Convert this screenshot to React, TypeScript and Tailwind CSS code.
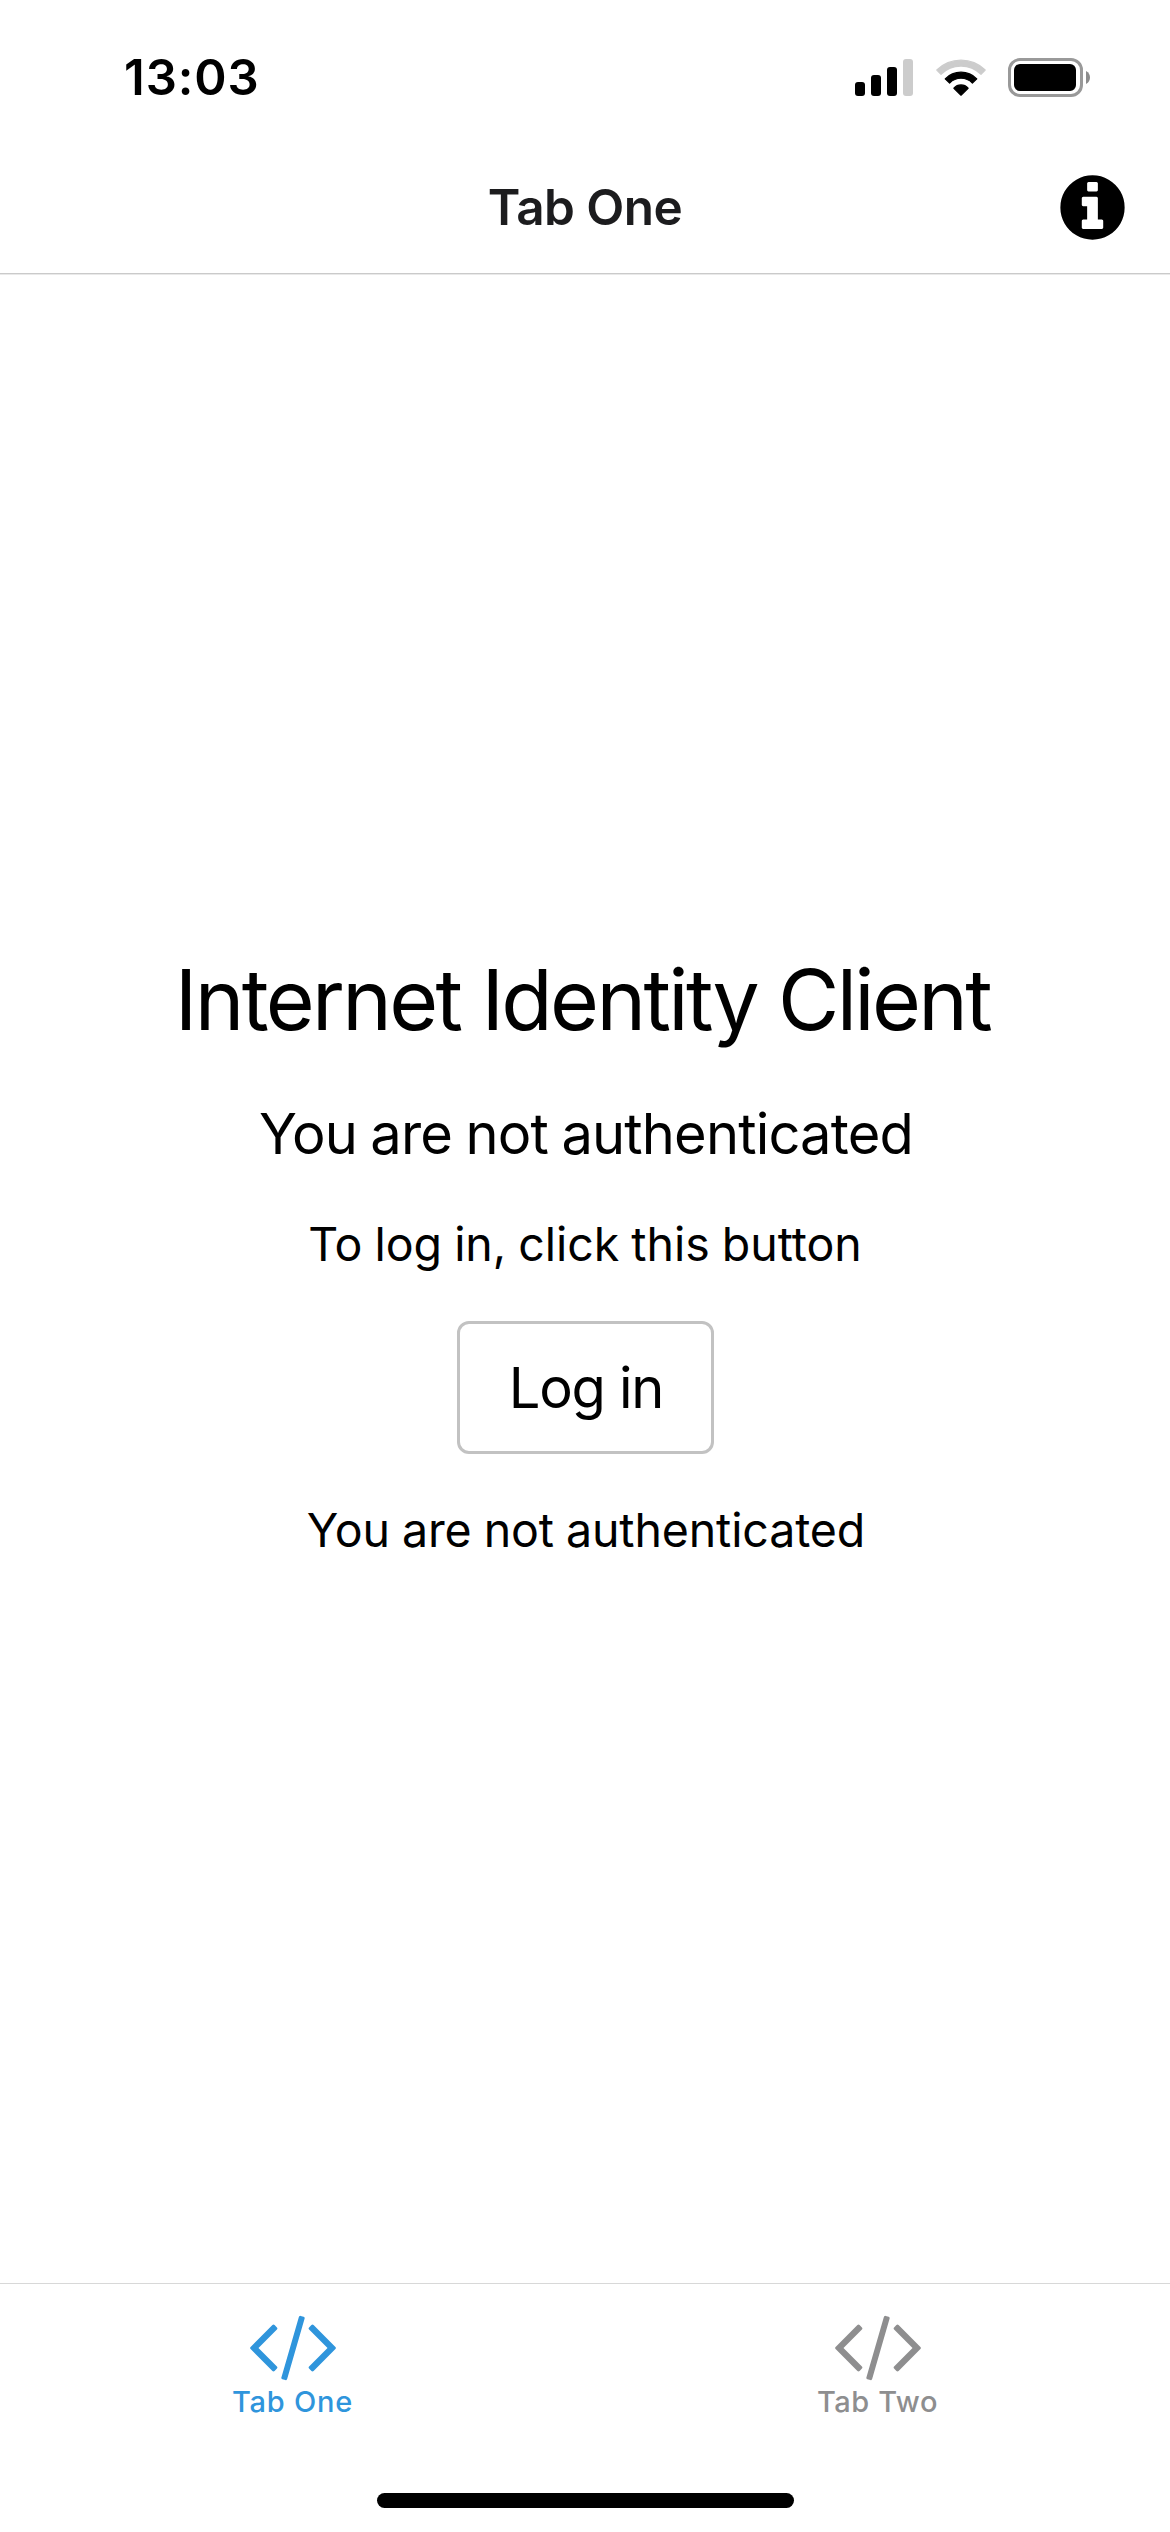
function SignalIcon() {
  return (
    <svg width="58" height="38" viewBox="0 0 58 38">
      <rect x="0" y="24" width="10" height="14" rx="3" fill="#000" />
      <rect x="16" y="17" width="10" height="21" rx="3" fill="#000" />
      <rect x="32" y="9" width="10" height="29" rx="3" fill="#000" />
      <rect x="48" y="1" width="10" height="37" rx="3" fill="#ccc" />
    </svg>
  );
}

function WifiIcon() {
  return (
    <svg width="52" height="38" viewBox="0 0 52 38" strokeWidth="1.2" strokeLinejoin="round">
      <path d="M1.8 12A34.6 34.6 0 0 1 50.2 12L46 16.3A28.4 28.4 0 0 0 6 16.3Z" fill="#ccc" stroke="#ccc" />
      <path d="M10.2 20.9A22 22 0 0 1 41.8 20.9L37.4 25A16 16 0 0 0 14.6 25Z" fill="#000" stroke="#000" />
      <path d="M18.9 30.2A9.4 9.4 0 0 1 33.1 30.2L26 37.2Z" fill="#000" stroke="#000" />
    </svg>
  );
}

function BatteryIcon() {
  return (
    <svg width="83" height="39" viewBox="0 0 83 39">
      <rect x="1.5" y="1.5" width="72" height="36" rx="10.5" fill="none" stroke="#999" strokeWidth="3" />
      <rect x="6" y="6" width="62" height="27" rx="6" fill="#000" />
      <path d="M78 13C81 14.6 82 17 82 19.5S81 24.4 78 26Z" fill="#8c8c8c" />
    </svg>
  );
}

function InfoIcon() {
  return (
    <svg width="75" height="75" viewBox="0 0 1792 1792" fill="currentColor">
      <path d="M1152 1376v-160q0-14-9-23t-23-9h-96v-512q0-14-9-23t-23-9h-320q-14 0-23 9t-9 23v160q0 14 9 23t23 9h96v320h-96q-14 0-23 9t-9 23v160q0 14 9 23t23 9h448q14 0 23-9t9-23zm-128-896v-160q0-14-9-23t-23-9h-192q-14 0-23 9t-9 23v160q0 14 9 23t23 9h192q14 0 23-9t9-23zm640 416q0 209-103 385.5t-279.5 279.5-385.5 103-385.5-103-279.5-279.5-103-385.5 103-385.5 279.5-279.5 385.5-103 385.5 103 279.5 279.5 103 385.5z" />
    </svg>
  );
}

function CodeIcon() {
  return (
    <svg width="90" height="84" viewBox="0 0 1920 1792" fill="currentColor">
      <path d="M617 1399l-50 50q-10 10-23 10t-23-10l-466-466q-10-10-10-23t10-23l466-466q10-10 23-10t23 10l50 50q10 10 10 23t-10 23l-393 393 393 393q10 10 10 23t-10 23zm591-1067l-373 1291q-4 13-15.5 19.5t-23.5 2.5l-62-17q-13-4-19.5-15.5t-2.5-24.5l373-1291q4-13 15.5-19.5t23.5-2.5l62 17q13 4 19.5 15.5t2.5 24.5zm657 651l-466 466q-10 10-23 10t-23-10l-50-50q-10-10-10-23t10-23l393-393-393-393q-10-10-10-23t10-23l50-50q10-10 23-10t23 10l466 466q10 10 10 23t-10 23z" />
    </svg>
  );
}

export default function App() {
  return (
    <div className="flex h-[2532px] w-[1170px] flex-col overflow-hidden bg-white font-['Inter',sans-serif] text-black">
      <div className="flex h-[141px] items-start justify-between pl-[124px] pr-[79px]">
        <span className="mt-[48px] text-[49px] font-semibold leading-[60px] tracking-[0.91px]">13:03</span>
        <div className="mt-[58px] flex items-start">
          <SignalIcon />
          <div className="ml-[21.5px]">
            <WifiIcon />
          </div>
          <div className="ml-[21.5px]">
            <BatteryIcon />
          </div>
        </div>
      </div>

      <header className="grid h-[132px] grid-cols-[1fr_auto_1fr] items-center">
        <span />
        <h1 className="text-[49.5px] font-semibold leading-[60px] tracking-[-0.53px] text-[#1c1c1e]">Tab One</h1>
        <button className="mr-10 justify-self-end" aria-label="Info">
          <InfoIcon />
        </button>
      </header>
      <div className="h-[2px] shrink-0 border-t border-[#cacaca] bg-[#e9e9e9]" />

      <main className="flex flex-1 flex-col items-center pt-[675px]">
        <h2 className="pr-[5px] text-[84px] leading-[100px] tracking-[-2.65px]">Internet Identity Client</h2>
        <p className="mt-[50px] pl-[2px] text-[56px] leading-[68px] tracking-[-0.83px] [word-spacing:-1.5px]">You are not authenticated</p>
        <p className="mt-[48px] text-[46.5px] leading-[56px] tracking-[-0.03px] [word-spacing:-1px]">To log in, click this button</p>
        <button className="mt-[49px] flex h-[133px] w-[257px] items-center justify-center rounded-[12px] border-[3px] border-[#c2c2c2] pl-[2px] text-[56px] leading-[68px] tracking-[-1.28px]">
          Log in
        </button>
        <p className="mt-[48px] pl-[2px] text-[46.5px] leading-[56px] tracking-[-0.13px] [word-spacing:-0.8px]">You are not authenticated</p>
      </main>

      <nav className="grid h-[249px] shrink-0 grid-cols-2 border-t border-[#d8d8d8]">
        <a className="flex flex-col items-center pt-[19px] text-[#2f95dc]">
          <CodeIcon />
          <span className="-mt-[3px] text-[29px] font-medium leading-[36px] tracking-[0.8px]">Tab One</span>
        </a>
        <a className="flex flex-col items-center pt-[19px] text-[#8e8e8f]">
          <CodeIcon />
          <span className="-mt-[3px] text-[29px] font-medium leading-[36px] tracking-[0.56px]">Tab Two</span>
        </a>
        <div className="col-span-2 mb-[24px] h-[15px] w-[417px] self-end justify-self-center rounded-full bg-black" />
      </nav>
    </div>
  );
}
